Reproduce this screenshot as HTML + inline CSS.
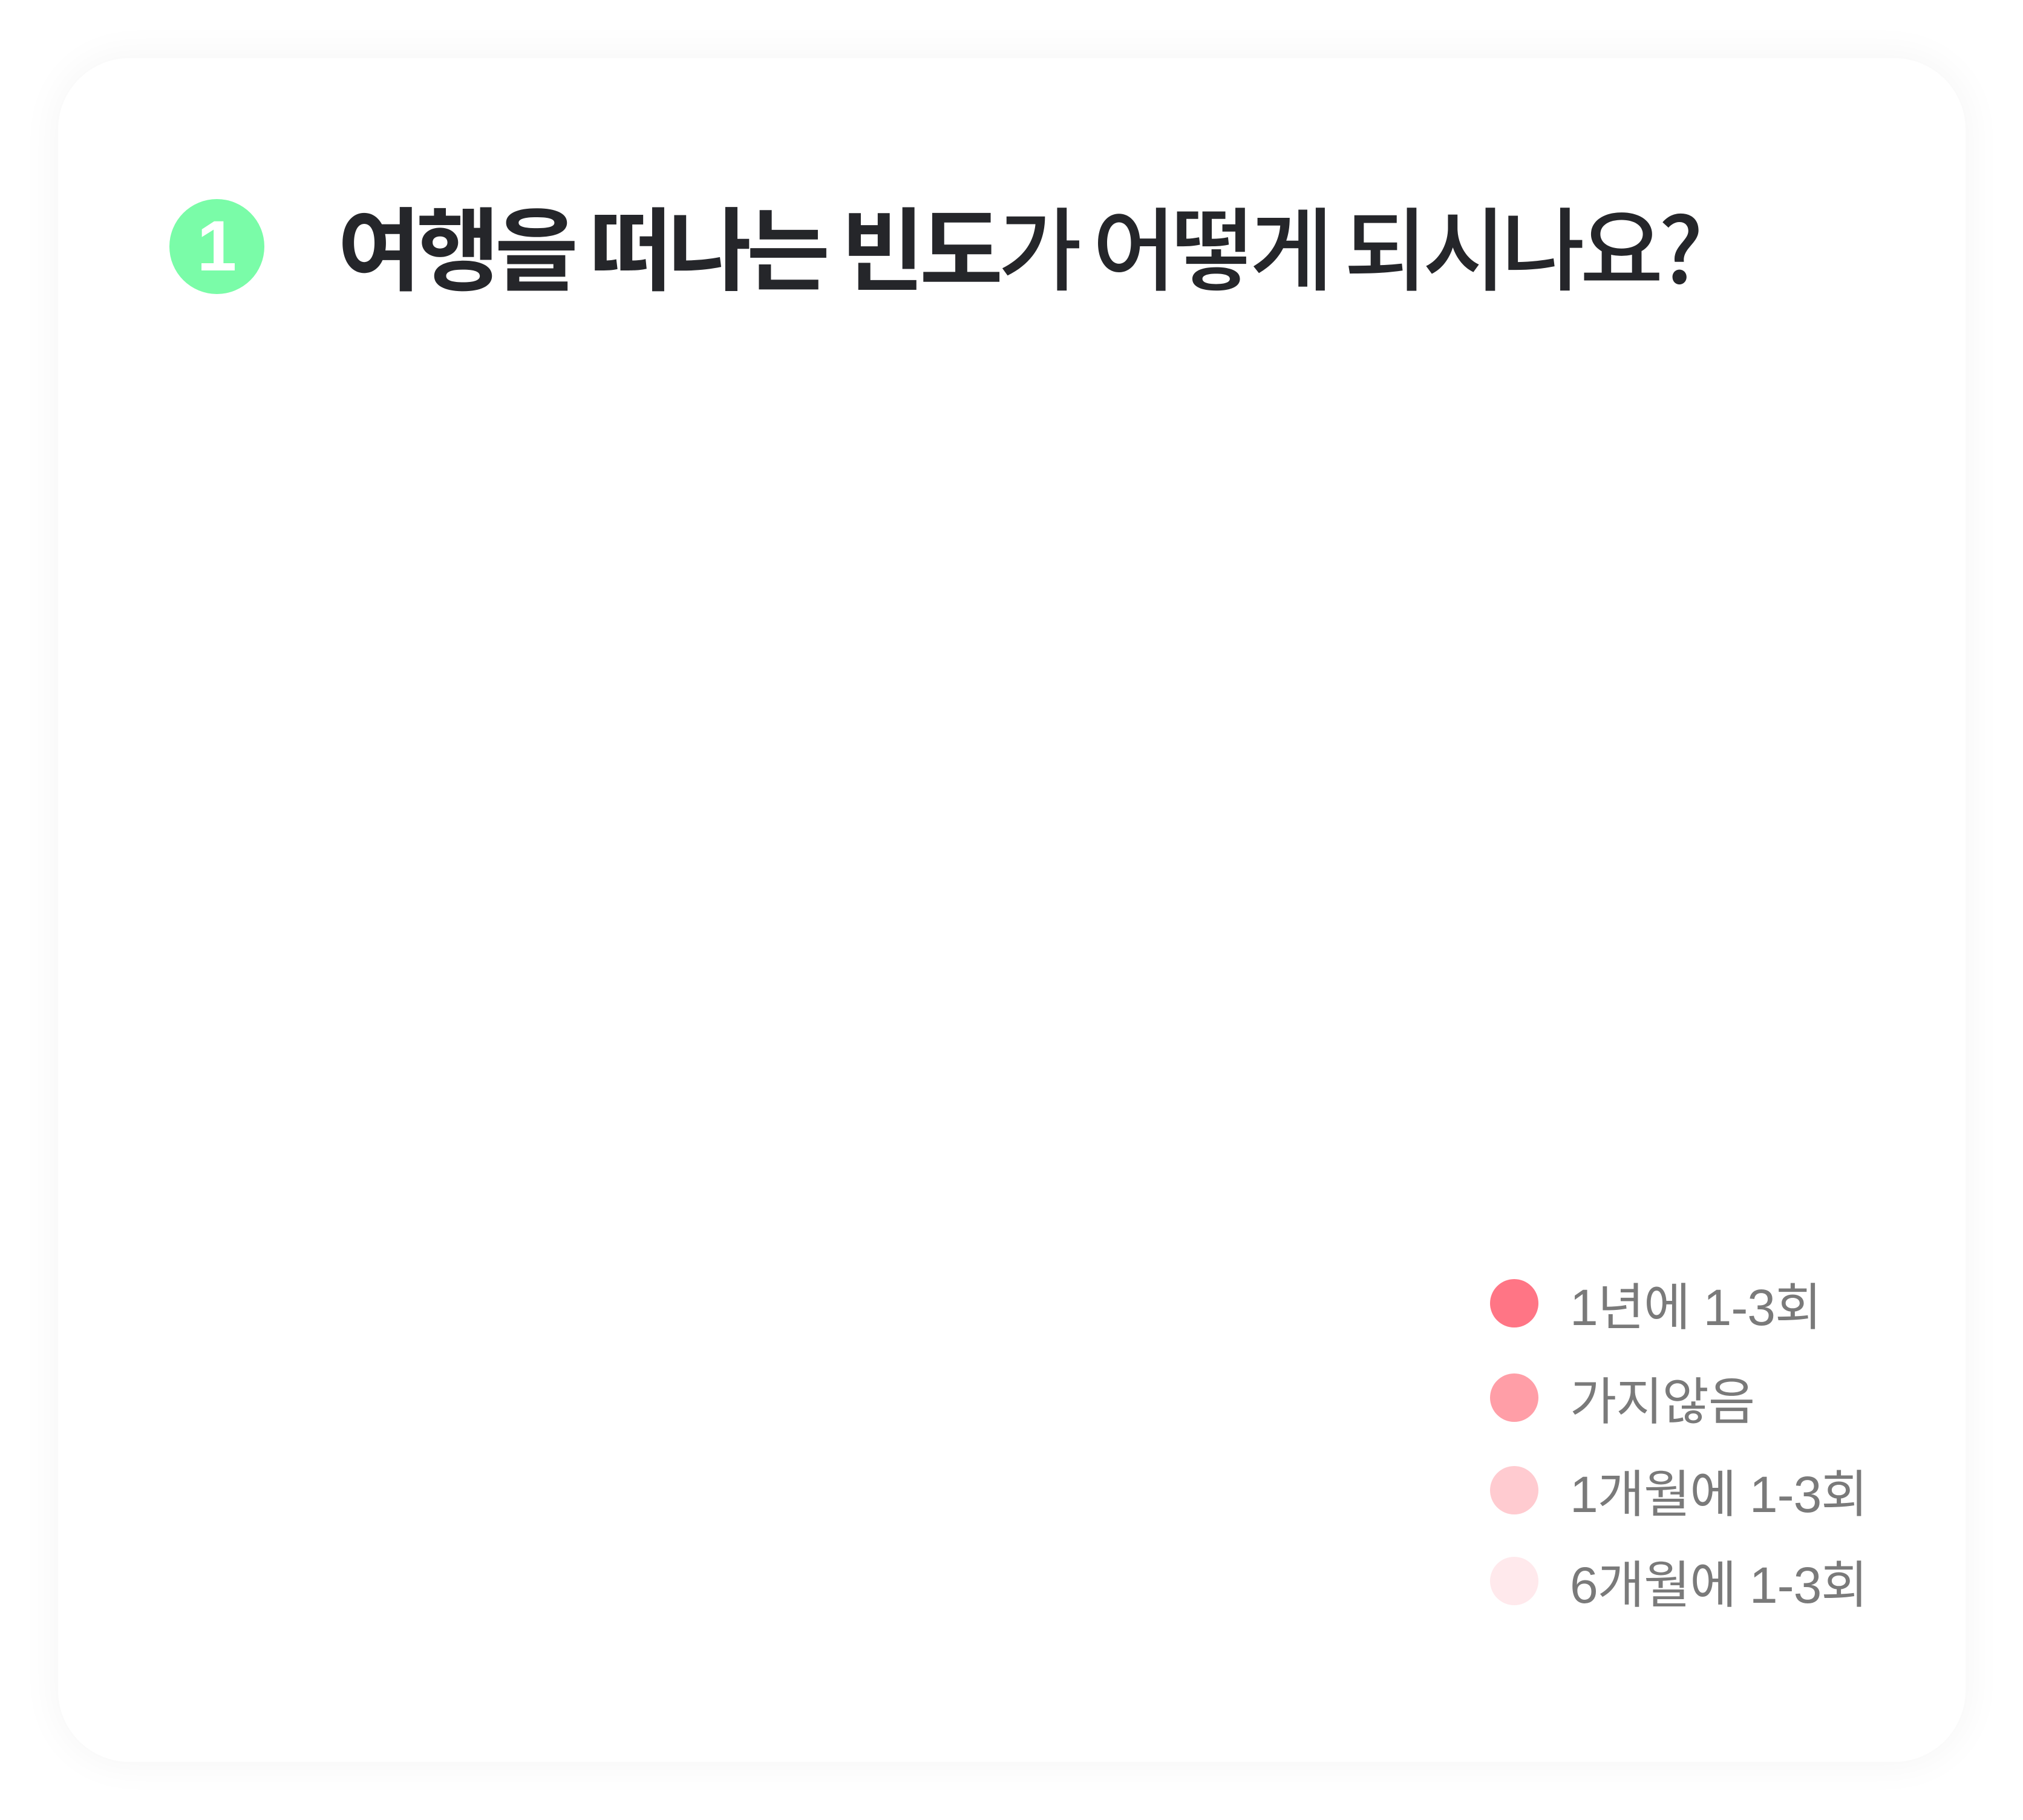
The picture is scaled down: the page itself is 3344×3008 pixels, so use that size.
<!DOCTYPE html>
<html><head><meta charset="utf-8"><style>
html,body{margin:0;padding:0;width:3344px;height:3008px;background:#fff;overflow:hidden;font-family:"Liberation Sans","Noto Sans CJK KR",sans-serif;}
.card{position:absolute;left:96px;top:96px;width:3153px;height:2816px;border-radius:118px;background:#fff;box-shadow:0 0 60px 10px rgba(0,0,0,0.035);}
.badge{position:absolute;left:280px;top:329px;width:157px;height:157px;border-radius:50%;background:#7afca8;color:#fff;font-weight:bold;font-size:118px;line-height:157px;text-align:center;}
.title{position:absolute;left:558px;top:314px;font-size:150px;line-height:180px;color:#25262a;white-space:nowrap;font-family:"Noto Sans CJK KR",sans-serif;font-weight:500;letter-spacing:-8px;}
.title b{font-weight:700;}
.row{position:absolute;left:2463px;height:84px;display:flex;align-items:center;}
.dot{width:80px;height:80px;border-radius:50%;margin-right:52px;}
.lbl{font-size:84px;color:#7a7a7a;font-family:"Liberation Sans","Noto Sans CJK KR",sans-serif;white-space:nowrap;letter-spacing:-1px;}
</style></head><body>
<div class="card"></div>
<div class="badge">1</div>
<div class="title"><b>여행을 떠나는 빈도</b>가 어떻게 되시나요?</div>
<div class="row" style="top:2112px"><div class="dot" style="background:#ff7585"></div><div class="lbl">1년에 1-3회</div></div>
<div class="row" style="top:2268px"><div class="dot" style="background:#ff9ea7"></div><div class="lbl">가지않음</div></div>
<div class="row" style="top:2421px"><div class="dot" style="background:#ffcbd0"></div><div class="lbl">1개월에 1-3회</div></div>
<div class="row" style="top:2571px"><div class="dot" style="background:#ffe9ec"></div><div class="lbl">6개월에 1-3회</div></div>
</body></html>
